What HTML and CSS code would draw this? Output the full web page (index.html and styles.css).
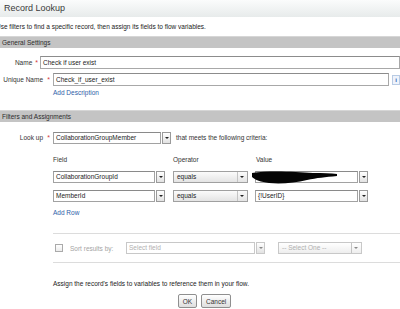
FILE: index.html
```html
<html lang="en">
  <head>
    <meta charset="UTF-8" />
    <title>Record Lookup</title>
    <link rel="stylesheet" href="styles.css">
  </head>
  <body>
    <div class="page">
      <div class="titlebar">Record Lookup</div>
      <p class="intro">Use filters to find a specific record, then assign its fields to flow variables.</p>

      <div class="bar">General Settings</div>
      <div class="settings">
        <div class="row">
          <span class="lbl">Name</span><span class="req">*</span>
          <div class="input name">Check if user exist</div>
        </div>
        <div class="row">
          <span class="lbl">Unique Name</span><span class="req">*</span>
          <div class="input uniq">Check_if_user_exist</div>
          <span class="info">i</span>
        </div>
        <a class="link desc">Add Description</a>
      </div>

      <div class="bar">Filters and Assignments</div>
      <div class="filters">
        <div class="row lookup">
          <span class="lbl">Look up</span><span class="req">*</span>
          <div class="select obj">
            <div class="box">CollaborationGroupMember</div>
            <div class="btn"></div>
          </div>
          <span class="meets">that meets the following criteria:</span>
        </div>

        <div class="grid head">
          <span>Field</span>
          <span>Operator</span>
          <span>Value</span>
        </div>
        <div class="grid crit">
          <div class="select">
            <div class="box">CollaborationGroupId</div>
            <div class="btn"></div>
          </div>
          <div class="op">equals<span class="arrow"></span></div>
          <div class="select val">
            <div class="box"></div>
            <div class="btn"></div>
            <svg class="scribble" width="90" height="16" viewBox="0 0 90 16">
              <path d="M1 4 C20 1 45 3 62 4 C72 4 80 4 86 5 L86 7 C74 8 66 9 56 11 C44 14 30 15 18 14 C10 13 4 11 1 8 Z" fill="#050505"/>
            </svg>
          </div>
          <span class="del"></span>
        </div>
        <div class="grid crit">
          <div class="select">
            <div class="box">MemberId</div>
            <div class="btn"></div>
          </div>
          <div class="op">equals<span class="arrow"></span></div>
          <div class="select val">
            <div class="box">{!UserID}</div>
            <div class="btn"></div>
          </div>
          <span class="del"></span>
        </div>
        <a class="link addrow">Add Row</a>

        <div class="sortrow">
          <span class="check"></span>
          <span class="sortlbl">Sort results by:</span>
          <div class="select dim field">
            <div class="box">Select field</div>
            <div class="btn"></div>
          </div>
          <div class="op dim one">-- Select One --<span class="arrow"></span></div>
        </div>

        <p class="assign">Assign the record's fields to variables to reference them in your flow.</p>
        <div class="actions">
          <button class="button ok">OK</button>
          <button class="button">Cancel</button>
        </div>
      </div>
    </div>
  </body>
</html>
```

FILE: styles.css
```css
* {
  margin: 0;
  padding: 0;
  box-sizing: border-box;
}
body {
  font-family: "Liberation Sans", Arial, sans-serif;
  font-size: 6.5px;
  color: #333333;
  background: #ffffff;
}
.page {
  width: 400px;
  height: 309px;
  overflow: hidden;
}
.titlebar {
  height: 17px;
  line-height: 17px;
  padding-left: 4px;
  font-size: 9px;
  color: #3a3a3a;
  background: linear-gradient(#fbfcfc, #e7ebeb);
}
.intro {
  height: 19px;
  line-height: 19px;
  text-indent: -4px;
  white-space: nowrap;
  color: #222222;
}
.bar {
  height: 12px;
  line-height: 12px;
  padding-left: 2px;
  background: #c4c4c4;
  color: #2c2c2c;
  border-top: 1px solid #d6d6d6;
}

/* form rows */
.row {
  display: flex;
  align-items: center;
  height: 13px;
}
.lbl {
  width: 44px;
  padding-right: 1px;
  text-align: right;
  white-space: nowrap;
  color: #333333;
}
.req {
  width: 9px;
  text-align: center;
  color: #d33a3a;
  font-size: 7px;
}
.input {
  height: 13px;
  line-height: 11px;
  padding-left: 2px;
  border: 1px solid #a8a8a8;
  border-top-color: #8c8c8c;
  color: #222222;
  white-space: nowrap;
  flex-shrink: 0;
}
.name {
  width: 360px;
}
.uniq {
  width: 336px;
}
.info {
  width: 8px;
  height: 10px;
  margin-left: 3px;
  border: 1px solid #b9cbe4;
  background: #eef3fb;
  color: #3060b0;
  font-weight: bold;
  font-size: 6px;
  line-height: 8px;
  text-align: center;
  flex-shrink: 0;
}
.settings {
  height: 62px;
  padding-top: 8px;
  display: flex;
  flex-direction: column;
  gap: 4px;
}
.link {
  display: block;
  color: #2d5ea8;
  height: 10px;
  line-height: 10px;
  margin-left: 53px;
}
.desc {
  margin-top: -2px;
}

/* selects */
.select {
  display: flex;
  height: 12px;
  position: relative;
}
.select .box {
  flex: 1;
  height: 12px;
  line-height: 10px;
  padding-left: 2px;
  border: 1px solid #a2a2a2;
  border-top-color: #8a8a8a;
  background: #ffffff;
  white-space: nowrap;
  overflow: hidden;
  color: #222222;
}
.select .btn {
  width: 9px;
  height: 12px;
  margin-left: 1px;
  border: 1px solid #9a9a9a;
  background: linear-gradient(#ffffff, #e2e2e2);
  position: relative;
}
.select .btn::after,
.arrow::after {
  content: "";
  position: absolute;
  left: 2px;
  top: 4px;
  border-left: 2px solid transparent;
  border-right: 2px solid transparent;
  border-top: 2px solid #222222;
}
.filters {
  padding-top: 9px;
}
.lookup .obj {
  width: 118px;
}
.meets {
  margin-left: 5px;
  white-space: nowrap;
}
.grid {
  display: grid;
  grid-template-columns: 112px 75px 112px 30px;
  column-gap: 8px;
  margin-left: 53px;
  align-items: center;
}
.head {
  height: 10px;
  margin-top: 11px;
  line-height: 10px;
}
.crit {
  height: 12px;
  margin-top: 6px;
}
.crit + .crit {
  margin-top: 7px;
}
.op {
  height: 12px;
  line-height: 10px;
  padding-left: 3px;
  border: 1px solid #a0a0a0;
  background: linear-gradient(#fbfbfb, #e4e4e4);
  position: relative;
  color: #222222;
}
.op .arrow {
  position: absolute;
  right: 0;
  top: 0;
  width: 10px;
  height: 10px;
  border-left: 1px solid #c4c4c4;
}
.val {
  margin-left: -1px;
}
.scribble {
  position: absolute;
  left: -4px;
  top: -2px;
}
.del {
  justify-self: end;
  width: 3px;
  height: 5px;
  background: #c8c8c8;
  margin-right: -1px;
}
.addrow {
  margin-top: 6px;
}

/* sort */
.sortrow {
  display: flex;
  align-items: center;
  height: 30px;
  margin-top: 15px;
  margin-left: 53px;
  width: 347px;
  border-top: 1px solid #dcdcdc;
  border-bottom: 1px solid #dcdcdc;
}
.check {
  width: 8px;
  height: 8px;
  margin-left: 2px;
  border: 1px solid #aaaaaa;
  background: linear-gradient(#ffffff, #ececec);
}
.sortlbl {
  margin-left: 7px;
  width: 56px;
  color: #a4a4a4;
  white-space: nowrap;
}
.dim .box,
.dim {
  color: #b0b0b0;
  border-color: #c8c8c8;
}
.dim .btn {
  border-color: #c8c8c8;
}
.dim .btn::after,
.dim .arrow::after {
  border-top-color: #888888;
}
.field {
  width: 139px;
}
.one {
  width: 84px;
  margin-left: 13px;
  background: linear-gradient(#ffffff, #eeeeee);
}
.assign {
  margin-left: 53px;
  margin-top: 16px;
  height: 10px;
  line-height: 10px;
  white-space: nowrap;
  color: #222222;
}
.actions {
  display: flex;
  gap: 4px;
  margin-left: 178px;
  margin-top: 5px;
}
.button {
  height: 14px;
  padding: 0 4px;
  font-family: "Liberation Sans", Arial, sans-serif;
  font-size: 6.5px;
  color: #333333;
  border: 1px solid #8f8f8f;
  border-radius: 2px;
  background: linear-gradient(#ffffff, #dedede);
}
.ok {
  width: 19px;
  padding: 0;
}
```
